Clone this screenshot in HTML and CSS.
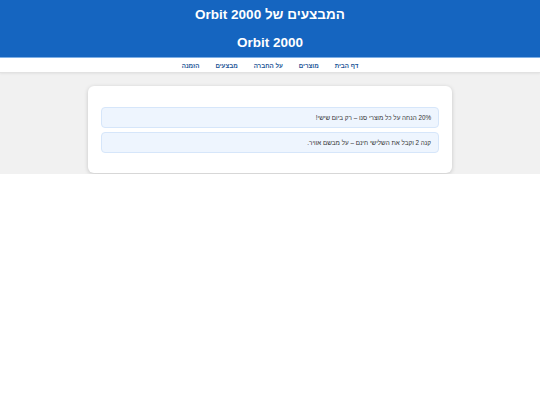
FILE: index.html
```html
<!DOCTYPE html>
<html lang="he" dir="rtl">
<head>
<meta charset="utf-8">
<title>המבצעים של Orbit 2000</title>
<link rel="stylesheet" href="styles.css">
</head>
<body>
<header class="site-header">
  <h1 class="page-title">המבצעים של Orbit 2000</h1>
  <div class="brand">Orbit 2000</div>
</header>
<nav class="main-nav">
  <a href="#" class="nav-link">דף הבית</a>
  <a href="#" class="nav-link">מוצרים</a>
  <a href="#" class="nav-link">על החברה</a>
  <a href="#" class="nav-link">מבצעים</a>
  <a href="#" class="nav-link">הזמנה</a>
</nav>
<main class="content">
  <section class="card">
    <ul class="offers">
      <li class="offer">20% הנחה על כל מוצרי סנו – רק ביום שישי!</li>
      <li class="offer">קנה 2 וקבל את השלישי חינם – על מבשם אוויר.</li>
    </ul>
  </section>
</main>
</body>
</html>
```
FILE: styles.css
```css
html, body {
  margin: 0;
  padding: 0;
  background: #ffffff;
}
body {
  font-family: "Liberation Sans", Arial, sans-serif;
  direction: rtl;
  color: #333333;
}
.site-header {
  background: #1565c0;
  color: #ffffff;
  text-align: center;
  border-bottom: 1px solid #7fb0e6;
}
.page-title {
  margin: 0;
  font-size: 13.5px;
  font-weight: bold;
  line-height: 29px;
}
.brand {
  font-size: 13.5px;
  font-weight: bold;
  line-height: 28px;
}
.main-nav {
  display: flex;
  justify-content: center;
  gap: 16px;
  height: 14px;
  align-items: center;
  background: #ffffff;
  border-bottom: 1px solid #e2e2e2;
  box-shadow: 0 1px 2px rgba(0,0,0,0.06);
  position: relative;
}
.nav-link {
  font-size: 6.2px;
  font-weight: bold;
  color: #1a5396;
  text-decoration: none;
}
.content {
  background: #f1f1f1;
  padding: 13px 0 1px;
}
.card {
  width: 364px;
  margin: 0 auto;
  background: #ffffff;
  border-radius: 6px;
  box-shadow: 0 1px 4px rgba(0,0,0,0.18);
  padding: 21px 13px 20px;
  box-sizing: border-box;
}
.offers {
  list-style: none;
  margin: 0;
  padding: 0;
  display: flex;
  flex-direction: column;
  gap: 4px;
}
.offer {
  height: 21px;
  box-sizing: border-box;
  background: #eef5fe;
  border: 1px solid #d6e6fa;
  border-radius: 4px;
  padding: 0 7px;
  font-size: 6.3px;
  line-height: 19px;
  color: #333333;
}
```
